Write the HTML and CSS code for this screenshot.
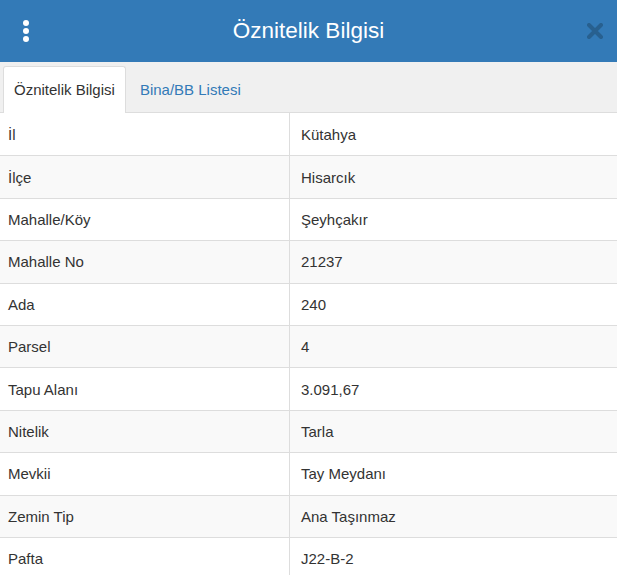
FILE: index.html
```html
<!DOCTYPE html>
<html lang="tr">
<head>
    <meta charset="UTF-8">
    <title>Öznitelik Bilgisi</title>
    <link rel="stylesheet" href="styles.css">
</head>
<body>
    <div class="panel">
        <div class="panel-header">
            <span class="menu-btn">
                <svg width="8" height="24" viewBox="0 0 8 24"><circle cx="4" cy="4" r="3"/><circle cx="4" cy="12" r="3"/><circle cx="4" cy="20" r="3"/></svg>
            </span>
            <h1 class="panel-title">Öznitelik Bilgisi</h1>
            <span class="close">
                <svg width="16" height="16" viewBox="0 0 16 16"><path d="M2 2 L14 14 M14 2 L2 14" stroke-width="4" stroke-linecap="round"/></svg>
            </span>
        </div>
        <ul class="tabs">
            <li class="tab active">Öznitelik Bilgisi</li>
            <li class="tab">Bina/BB Listesi</li>
        </ul>
        <table class="attr-table">
            <tr><td>İl</td><td>Kütahya</td></tr>
            <tr><td>İlçe</td><td>Hisarcık</td></tr>
            <tr><td>Mahalle/Köy</td><td>Şeyhçakır</td></tr>
            <tr><td>Mahalle No</td><td>21237</td></tr>
            <tr><td>Ada</td><td>240</td></tr>
            <tr><td>Parsel</td><td>4</td></tr>
            <tr><td>Tapu Alanı</td><td>3.091,67</td></tr>
            <tr><td>Nitelik</td><td>Tarla</td></tr>
            <tr><td>Mevkii</td><td>Tay Meydanı</td></tr>
            <tr><td>Zemin Tip</td><td>Ana Taşınmaz</td></tr>
            <tr><td>Pafta</td><td>J22-B-2</td></tr>
        </table>
    </div>
</body>
</html>
```

FILE: styles.css
```css
body {
    margin: 0;
    background: #fff;
    color: #333;
    font-family: "Liberation Sans", Arial, sans-serif;
    font-size: 15px;
}
.panel {
    width: 617px;
}
.panel-header {
    height: 62px;
    background: #337ab7;
    display: flex;
    align-items: center;
    padding: 0 14px 0 22px;
}
.menu-btn svg {
    display: block;
    fill: #fff;
}
.panel-title {
    flex: 1;
    margin: 0;
    text-align: center;
    color: #fff;
    font-size: 22.5px;
    font-weight: normal;
}
.close svg {
    display: block;
    stroke: #28608f;
}
.tabs {
    list-style: none;
    margin: 0;
    padding: 4px 0 0 3px;
    background: #f0f0f0;
    display: flex;
    border-bottom: 1px solid #ddd;
}
.tab {
    padding: 13px 10px 12px 10px;
    margin-right: 3px;
    color: #337ab7;
    border: 1px solid transparent;
    border-bottom: none;
    margin-bottom: -1px;
    line-height: 20px;
}
.tab.active {
    background: #fff;
    color: #333;
    border-color: #ddd;
    border-radius: 3px 3px 0 0;
    padding-bottom: 13px;
}
.attr-table {
    width: 100%;
    border-collapse: collapse;
}
.attr-table td {
    height: 41.4px;
    padding: 0 8px;
    border-top: 1px solid #ddd;
    vertical-align: middle;
}
.attr-table tr:first-child td {
    border-top: none;
    height: 42.4px;
}
.attr-table td:first-child {
    width: 273px;
    border-right: 1px solid #ddd;
}
.attr-table td:last-child {
    padding-left: 11px;
}
.attr-table tr:nth-child(even) td {
    background: #f9f9f9;
}
```
